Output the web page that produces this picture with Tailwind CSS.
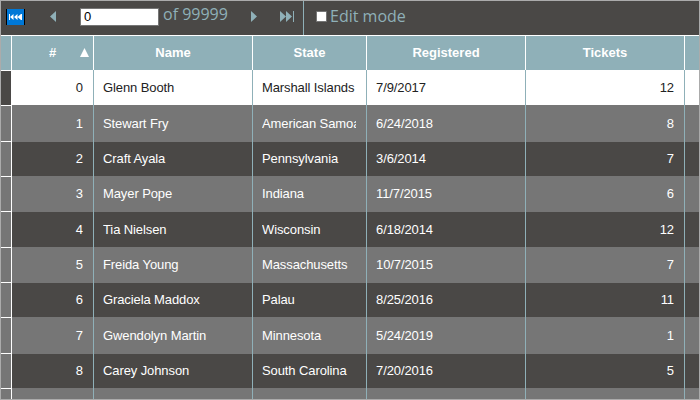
<!DOCTYPE html>
<html lang="en">
  <head>
    <meta charset="UTF-8" />
    <title>Grid</title>
    <script src="https://cdn.jsdelivr.net/npm/@tailwindcss/browser@4"></script>
  </head>
  <body class="w-[700px] h-[400px] overflow-hidden bg-[#767676]">
    <div class="w-[700px] h-[400px] overflow-hidden border border-[#ababab] font-['Liberation_Sans',Arial,sans-serif]">
      <div class="h-[35px] flex items-center bg-[#4a4846] border-b border-white">
        <div class="w-[303px] h-full flex items-center border-r border-[#8fb0b8] pb-[3px]">
          <button class="ml-[5px] w-[19px] h-[16px] flex items-center justify-center bg-[#0078d7] border-x border-black">
            <svg width="13" height="6" viewBox="0 0 13 6" fill="#fff"><path d="M0 0h1v6H0zM4.5 0v6L1 3zM8.5 0v6L5 3zM8.500 3L12 0v6zM12 0h1v6h-1z"/></svg>
          </button>
          <svg class="ml-[25px]" width="6" height="11" viewBox="0 0 6 11" fill="#8fb0b8"><path d="M6 0v11L0 5.5z"/></svg>
          <input value="0" class="ml-[24px] w-[79px] h-[18px] bg-white border border-[#767676] px-[3px] text-[13px] text-black" />
          <span class="ml-[4px] mb-[6px] w-[88px] text-[16px] font-medium text-[#8fb0b8] font-['Open_Sans',sans-serif]">of 99999</span>
          <svg width="6" height="11" viewBox="0 0 6 11" fill="#8fb0b8"><path d="M0 0v11l6-5.5z"/></svg>
          <svg class="ml-[23px]" width="14" height="11" viewBox="0 0 14 11" fill="#8fb0b8"><path d="M0 0v11l6-5.5zM6 0v11l6-5.5zM13 0h1v11h-1z"/></svg>
        </div>
        <span class="ml-[12px] mb-[3px] w-[11px] h-[11px] bg-white border border-[#767676] rounded-[1px]"></span>
        <span class="ml-[3px] mb-[5px] text-[16px] font-medium text-[#8fb0b8] font-['Open_Sans',sans-serif]">Edit mode</span>
      </div>

      <table class="border-separate border-spacing-0 table-fixed w-[698px] text-[13px] tracking-[-0.1px]">
        <colgroup>
          <col class="w-[11px]" /><col class="w-[82px]" /><col class="w-[159px]" /><col class="w-[114px]" /><col class="w-[159px]" /><col class="w-[159px]" /><col />
        </colgroup>
        <thead class="bg-[#8fb0b8] text-white text-[13px] font-bold tracking-normal">
          <tr class="h-[34px]">
            <th class="border-r border-white"></th>
            <th class="border-r border-white relative">#<svg class="absolute right-[4px] top-[12px]" width="9" height="9" viewBox="0 0 9 9" fill="#fff"><path d="M4.5 0L9 9H0z"/></svg></th>
            <th class="border-r border-white">Name</th>
            <th class="border-r border-white">State</th>
            <th class="border-r border-white">Registered</th>
            <th class="border-r border-white">Tickets</th>
            <th></th>
          </tr>
        </thead>
        <tbody id="rows"></tbody>
      </table>
    </div>

    <script>
      const data = [
        [0, "Glenn Booth", "Marshall Islands", "7/9/2017", 12],
        [1, "Stewart Fry", "American Samoa", "6/24/2018", 8],
        [2, "Craft Ayala", "Pennsylvania", "3/6/2014", 7],
        [3, "Mayer Pope", "Indiana", "11/7/2015", 6],
        [4, "Tia Nielsen", "Wisconsin", "6/18/2014", 12],
        [5, "Freida Young", "Massachusetts", "10/7/2015", 7],
        [6, "Graciela Maddox", "Palau", "8/25/2016", 11],
        [7, "Gwendolyn Martin", "Minnesota", "5/24/2019", 1],
        [8, "Carey Johnson", "South Carolina", "7/20/2016", 5],
        ["", "", "", "", ""],
      ];
      // row bands are not even in the screenshot
      const heights = ["h-[35px]", "h-[37px]", "h-[34px]", "h-[36px]", "h-[35px]", "h-[36px]", "h-[34px]", "h-[37px]", "h-[34px]", "h-[36px]"];
      const cell = "border-r border-[#8fb0b8] pl-[9px] pr-[10px]";
      const clip = "block overflow-hidden whitespace-nowrap";
      document.getElementById("rows").innerHTML = data
        .map((r, i) => {
          const tone = i === 0 ? "bg-white text-[#222]" : i % 2 ? "bg-[#767676] text-white" : "bg-[#4a4846] text-white";
          const handle = i === 0 ? "bg-[#4a4846] border-t" : i % 2 ? "bg-[#767676] border-y" : "bg-[#767676]";
          return `<tr class="${heights[i]} ${tone}">
            <td class="${handle} border-r border-white"></td>
            <td class="${cell} text-right"><span class="${clip}">${r[0]}</span></td>
            <td class="${cell}"><span class="${clip}">${r[1]}</span></td>
            <td class="${cell}"><span class="${clip}">${r[2]}</span></td>
            <td class="${cell}"><span class="${clip}">${r[3]}</span></td>
            <td class="${cell} text-right"><span class="${clip}">${r[4]}</span></td>
            <td class="${cell} border-r-0"></td>
          </tr>`;
        })
        .join("");
    </script>
  </body>
</html>
